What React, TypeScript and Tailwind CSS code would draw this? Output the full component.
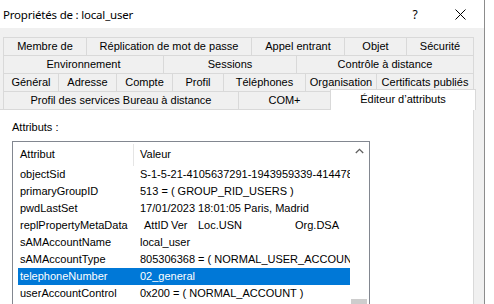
import React from "react";

const tabRows: { label: string; w: string }[][] = [
    [
        {label: "Membre de", w: "w-[83px]"},
        {label: "Réplication de mot de passe", w: "w-[165px]"},
        {label: "Appel entrant", w: "w-[93px]"},
        {label: "Objet", w: "w-[62px]"},
        {label: "Sécurité", w: "w-[68px]"},
    ],
    [
        {label: "Environnement", w: "w-[160px]"},
        {label: "Sessions", w: "w-[133px]"},
        {label: "Contrôle à distance", w: "w-[178px]"},
    ],
    [
        {label: "Général", w: "w-[55px]"},
        {label: "Adresse", w: "w-[58px]"},
        {label: "Compte", w: "w-[56px]"},
        {label: "Profil", w: "w-[51px]"},
        {label: "Téléphones", w: "w-[82px]"},
        {label: "Organisation", w: "w-[71px]"},
        {label: "Certificats publiés", w: "w-[98px]"},
    ],
]

const attributes: { name: string; value: React.ReactNode; selected?: boolean }[] = [
    {name: "objectSid", value: "S-1-5-21-4105637291-1943959339-4144781"},
    {name: "primaryGroupID", value: "513 = ( GROUP_RID_USERS )"},
    {name: "pwdLastSet", value: "17/01/2023 18:01:05 Paris, Madrid"},
    {
        name: "replPropertyMetaData",
        value: (
            <span className="flex">
                <span className="ml-[4px] w-[27px]">AttID</span>
                <span className="w-[27px]">Ver</span>
                <span className="w-[97px]">Loc.USN</span>
                <span>Org.DSA</span>
            </span>
        ),
    },
    {name: "sAMAccountName", value: "local_user"},
    {name: "sAMAccountType", value: "805306368 = ( NORMAL_USER_ACCOUNT )"},
    {name: "telephoneNumber", value: "02_general", selected: true},
    {name: "userAccountControl", value: "0x200 = ( NORMAL_ACCOUNT )"},
]

const Tab = ({label, w, last}: { label: string; w: string; last?: boolean }) => (
    <div className={"h-[18px] flex items-center justify-center border-t border-l border-[#d9d9d9] whitespace-nowrap " + w + (last ? " border-r" : "")}>
        {label}
    </div>
)

const App = () => {
    return (
        <div className="w-[494px] h-[304px] bg-white overflow-hidden font-['Liberation_Sans',Arial,sans-serif] text-[11px] leading-[13px] text-black">
            <div className="w-[485px] h-[304px] bg-[#f0f0f0] border-r border-[#8c8c8c] flex flex-col">
                {/* title bar */}
                <div className="h-[28px] shrink-0 bg-white flex items-center pl-[3px] font-['Noto_Sans',sans-serif] text-[11.5px]">
                    <span className="flex-1 tracking-[-0.2px]">Propriétés de : local_user</span>
                    <span className="w-[10px] text-center mr-[35px] text-[12px]">?</span>
                    <svg className="mr-[18px]" width="11" height="11" viewBox="0 0 11 11">
                        <path d="M0.5 0.5 L10.5 10.5 M10.5 0.5 L0.5 10.5" stroke="#000" strokeWidth="1" fill="none"/>
                    </svg>
                </div>

                {/* tabs */}
                <div className="pt-[9px] pl-[3px] flex flex-col">
                    {tabRows.map((row, i) => (
                        <div key={i} className="flex">
                            {row.map((t, j) => <Tab key={j} label={t.label} w={t.w} last={j === row.length - 1}/>)}
                        </div>
                    ))}
                    <div className="flex items-start h-[18px]">
                        <Tab label="Profil des services Bureau à distance" w="w-[235px]"/>
                        <Tab label="COM+" w="w-[92px]"/>
                        <div className="relative z-10 -mt-[2px] h-[21px] w-[146px] bg-white border-t border-l border-r border-[#d9d9d9] flex items-center justify-center pb-[1px]">
                            Éditeur d’attributs
                        </div>
                    </div>
                </div>

                {/* page */}
                <div className="-ml-px w-[475px] flex-1 bg-white border border-[#d9d9d9] pl-[12px] pt-[11px]">
                    <div>Attributs :</div>
                    <div className="mt-[7px] w-[358px] h-[200px] border border-[#828790] flex">
                        <div className="w-[337px] overflow-hidden">
                            <div className="h-[24px] flex items-center">
                                <div className="w-[120px] pl-[7px]">Attribut</div>
                                <div className="w-px h-[22px] self-end bg-[#e5e5e5]"></div>
                                <div className="pl-[6px]">Valeur</div>
                            </div>
                            {attributes.map((a, i) => (
                                <div key={i}
                                     className={"ml-[5px] h-[17px] flex items-center whitespace-nowrap " + (a.selected ? "bg-[#0078d7] text-white" : "")}>
                                    <div className="w-[122px] pl-[2px] shrink-0">{a.name}</div>
                                    <div>{a.value}</div>
                                </div>
                            ))}
                        </div>
                        <div className="w-[18px] flex flex-col">
                            <div className="h-[17px] flex items-center justify-center">
                                <svg width="9" height="6" viewBox="0 0 9 6">
                                    <path d="M0.8 5 L4.5 1.3 L8.2 5" stroke="#606060" strokeWidth="1.3" fill="none"/>
                                </svg>
                            </div>
                            <div className="mt-[140px] mx-[1px] h-[40px] bg-[#cdcdcd]"></div>
                        </div>
                    </div>
                </div>
            </div>
        </div>
    )
}

export default App;
